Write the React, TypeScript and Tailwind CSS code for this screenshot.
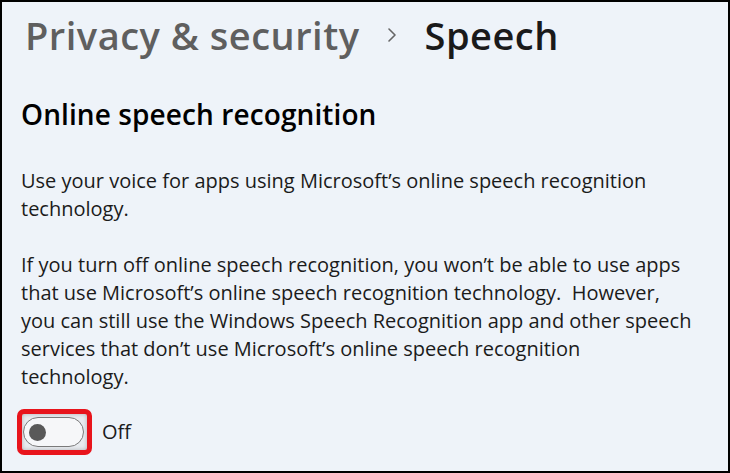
import React from "react";

export default function App() {
  const font = { fontFamily: '"Open Sans", "Noto Sans", sans-serif' };
  return (
    <div
      className="w-[730px] h-[473px] bg-[#eef3f9] border-2 border-black box-border overflow-hidden text-[#1b1b1b]"
      style={font}
    >
      <div className="pl-[19px] pt-[14px]">
        <div className="ml-[4px] flex items-center h-[38px] text-[38px] font-semibold leading-[38px] tracking-[0.5px]">
          <span className="text-[#5f5f5f]">Privacy &amp; security</span>
          <svg
            className="ml-[28px] mr-[29px]"
            width="8"
            height="14"
            viewBox="0 0 8 14"
            fill="none"
          >
            <polyline
              points="1,1 7,7 1,13"
              stroke="#666666"
              strokeWidth="1.6"
              strokeLinecap="round"
              strokeLinejoin="round"
            />
          </svg>
          <span className="text-[#1a1a1a]">Speech</span>
        </div>
        <div className="mt-[44px] text-[28px] font-semibold leading-[32px] text-black tracking-[0.1px]">
          Online speech recognition
        </div>
        <div className="mt-[37px] text-[20px] leading-[28px] whitespace-nowrap text-[#1b1b1b]">
          <p>
            Use your voice for apps using Microsoft’s online speech recognition
            <br />
            technology.
          </p>
          <p className="mt-[28px]">
            If you turn off online speech recognition, you won’t be able to use apps
            <br />
            that use Microsoft’s online speech recognition technology.&nbsp; However,
            <br />
            you can still use the Windows Speech Recognition app and other speech
            <br />
            services that don’t use Microsoft’s online speech recognition
            <br />
            technology.
          </p>
        </div>
        <div className="mt-[18px] flex items-center">
          <div className="-ml-[4px] w-[75px] h-[46px] rounded-[7px] border-[5px] border-[#e8141c] flex items-center justify-start pl-[1px] shadow-[inset_0_0_4px_rgba(0,0,0,0.25)] bg-[#e9ecf0]">
            <div className="w-[61px] h-[30px] rounded-full border-[1.5px] border-[#7a7a7a] bg-[#f6f7f9] flex items-center pl-[5px]">
              <div className="w-[17px] h-[17px] rounded-full bg-[#595959]" />
            </div>
          </div>
          <span className="ml-[10px] text-[20px] leading-[28px] text-[#1b1b1b]">Off</span>
        </div>
      </div>
    </div>
  );
}
